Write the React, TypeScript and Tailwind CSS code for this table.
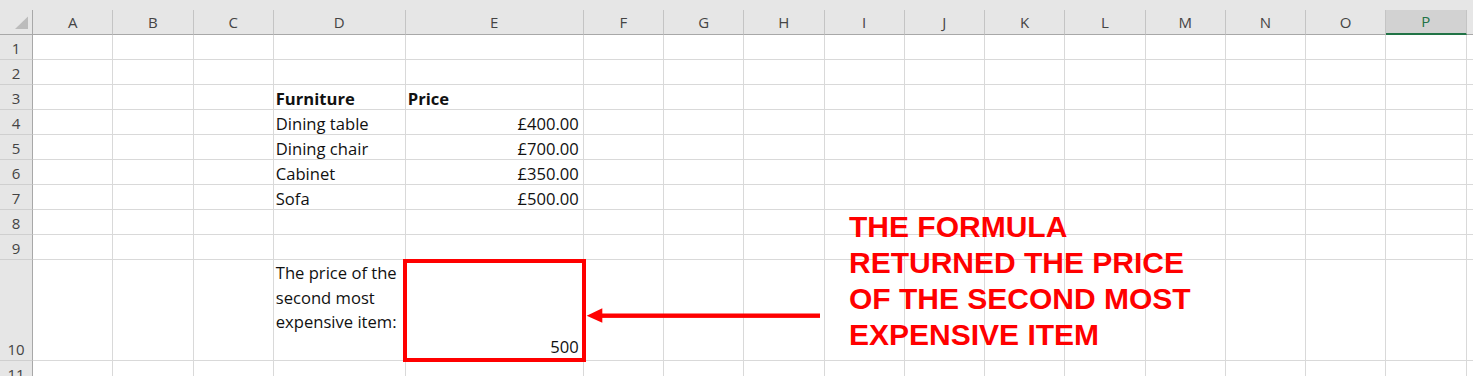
const cols = ['A', 'B', 'C', 'D', 'E', 'F', 'G', 'H', 'I', 'J', 'K', 'L', 'M', 'N', 'O', 'P'];

const gridCols =
  'grid grid-cols-[33px_repeat(3,80.25px)_132px_178px_repeat(11,80.25px)_1fr]';

type Cell = { text?: string; bold?: boolean; right?: boolean };

const data: Record<number, Record<string, Cell>> = {
  3: { D: { text: 'Furniture', bold: true }, E: { text: 'Price', bold: true } },
  4: { D: { text: 'Dining table' }, E: { text: '£400.00', right: true } },
  5: { D: { text: 'Dining chair' }, E: { text: '£700.00', right: true } },
  6: { D: { text: 'Cabinet' }, E: { text: '£350.00', right: true } },
  7: { D: { text: 'Sofa' }, E: { text: '£500.00', right: true } },
};

function ColumnHeader() {
  return (
    <div className={`${gridCols} h-[25px] bg-[#e6e6e6] text-[15px] text-[#444]`}>
      <div className="relative border-r border-b border-r-[#a8a8a8] border-b-[#a8a8a8]">
        <svg className="absolute left-0 top-0" width="32" height="24" viewBox="0 0 32 24">
          <polygon points="15,19 28,19 28,6.5" fill="#bcbcbc" />
        </svg>
      </div>
      {cols.map((c) =>
        c === 'P' ? (
          <div
            key={c}
            className="flex items-center justify-center border-r border-r-[#c4c4c4] border-b-2 border-b-[#217346] bg-[#d2d2d2] text-[#217346]"
          >
            {c}
          </div>
        ) : (
          <div
            key={c}
            className="flex items-center justify-center border-r border-b border-r-[#c4c4c4] border-b-[#a8a8a8]"
          >
            {c}
          </div>
        )
      )}
      <div className="border-b border-b-[#a8a8a8]" />
    </div>
  );
}

function RowHeader({ n }: { n: number }) {
  return (
    <div className="flex items-end justify-center border-r border-b border-r-[#a8a8a8] border-b-[#cfcfcf] bg-[#e6e6e6] pb-px text-[15px] leading-[20px] text-[#444]">
      {n}
    </div>
  );
}

function Row({ n }: { n: number }) {
  const row = data[n] ?? {};
  return (
    <div className={`${gridCols} h-[25px]`}>
      <RowHeader n={n} />
      {cols.map((c) => {
        const cell = row[c];
        return (
          <div
            key={c}
            className={`flex items-end whitespace-nowrap border-r border-b border-[#d9d9d9] leading-[20px] ${
              cell?.right ? 'justify-end pr-[4px]' : 'pl-[2px]'
            } ${cell?.bold ? 'font-bold' : ''}`}
          >
            {cell?.text}
          </div>
        );
      })}
      <div className="border-b border-[#d9d9d9]" />
    </div>
  );
}

function TallRow() {
  return (
    <div className={`${gridCols} h-[101px]`}>
      <RowHeader n={10} />
      {cols.map((c) => {
        if (c === 'D') {
          return (
            <div
              key={c}
              className="whitespace-nowrap border-r border-b border-[#d9d9d9] pl-[2px] pt-px leading-[24.5px]"
            >
              The price of the
              <br />
              second most
              <br />
              expensive item:
            </div>
          );
        }
        if (c === 'E') {
          return (
            <div
              key={c}
              className="flex items-end justify-end border-r border-b border-[#d9d9d9] pb-[3px] pr-[4px] leading-[20px]"
            >
              500
            </div>
          );
        }
        return <div key={c} className="border-r border-b border-[#d9d9d9]" />;
      })}
      <div className="border-b border-[#d9d9d9]" />
    </div>
  );
}

export default function App() {
  return (
    <div className="relative h-[376px] w-[1473px] overflow-hidden bg-white font-['Open_Sans',sans-serif] text-[16.6px] text-[#111]">
      <div className="h-[10px] bg-[#e6e6e6]" />
      <ColumnHeader />
      {[1, 2, 3, 4, 5, 6, 7, 8, 9].map((n) => (
        <Row key={n} n={n} />
      ))}
      <TallRow />
      <Row n={11} />

      {/* highlight box on E10 */}
      <div className="absolute left-[403px] top-[259px] h-[103px] w-[183px] border-4 border-[#ff0000]" />

      {/* arrow */}
      <svg className="absolute left-[580px] top-[300px]" width="245" height="32" viewBox="0 0 245 32">
        <rect x="20" y="13.5" width="220" height="4.4" fill="#ff0000" />
        <polygon points="6.7,15.7 22.3,8.3 22.3,22.7" fill="#ff0000" />
      </svg>

      <div className="absolute left-[849px] top-[209px] whitespace-nowrap font-['Liberation_Sans',Arial,sans-serif] text-[30px] font-bold leading-[36px] text-[#ff0000]">
        THE FORMULA
        <br />
        RETURNED THE PRICE
        <br />
        OF THE SECOND MOST
        <br />
        EXPENSIVE ITEM
      </div>
    </div>
  );
}
